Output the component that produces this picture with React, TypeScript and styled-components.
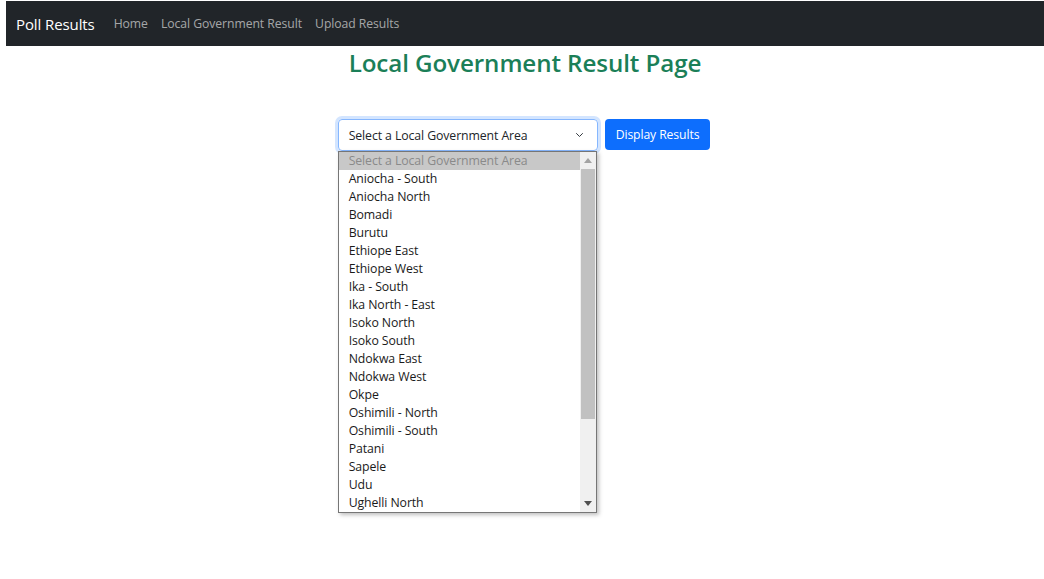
import React from "react";
import styled, { createGlobalStyle } from "styled-components";

const Global = createGlobalStyle`
  html, body { margin: 0; padding: 0; background: #fff; }
  body { font-family: "Open Sans", "Noto Sans", sans-serif; color: #212529; }
  * { box-sizing: border-box; }
`;

const Page = styled.div`
  padding: 1px 0 0 6px;
  width: 1044px;
  height: 579px;
  overflow: hidden;
`;

const Navbar = styled.nav`
  height: 45px;
  background: #212529;
  display: flex;
  align-items: center;
  padding: 0 10px;
`;

const Brand = styled.span`
  color: #fff;
  font-size: 15px;
  margin-right: 19px;
  letter-spacing: -0.1px;
`;

const NavLinks = styled.div`
  display: flex;
  gap: 13px;
`;

const NavLink = styled.span`
  color: rgba(255, 255, 255, 0.6);
  font-size: 12.2px;
  letter-spacing: -0.05px;
`;

const Main = styled.main`
  display: flex;
  flex-direction: column;
  align-items: center;
`;

const Title = styled.h2`
  margin: 1px 0 0;
  font-size: 24.2px;
  font-weight: 600;
  color: #1b7f58;
  line-height: 32px;
  letter-spacing: -0.1px;
`;

const FormRow = styled.div`
  margin-top: 40px;
  padding-right: 2px;
  display: flex;
  gap: 7px;
  align-items: flex-start;
`;

const SelectWrap = styled.div`
  position: relative;
  width: 260px;
`;

const SelectBox = styled.div`
  height: 32px;
  border: 1px solid #86b7fe;
  border-radius: 4px;
  box-shadow: 0 0 0 3px rgba(13, 110, 253, 0.18);
  display: flex;
  align-items: center;
  justify-content: space-between;
  padding: 0 12px 0 10px;
  font-size: 12.3px;
  color: #212529;
  letter-spacing: -0.1px;
`;

const List = styled.div`
  position: absolute;
  top: 32px;
  left: 0;
  width: 259px;
  height: 362px;
  background: #fff;
  border: 1px solid #767676;
  box-shadow: 2px 2px 4px rgba(0, 0, 0, 0.25);
  display: flex;
  overflow: hidden;
`;

const Options = styled.div`
  flex: 1;
  display: flex;
  flex-direction: column;
`;

const Option = styled.div<{ $placeholder?: boolean }>`
  height: 18px;
  line-height: 18px;
  padding-left: 10px;
  font-size: 12.3px;
  letter-spacing: -0.1px;
  white-space: nowrap;
  background: ${(p) => (p.$placeholder ? "#c8c8c8" : "transparent")};
  color: ${(p) => (p.$placeholder ? "#8a8a8a" : "#1a1a1a")};
`;

const Scrollbar = styled.div`
  width: 16px;
  background: #f0f0f0;
  display: flex;
  flex-direction: column;
  align-items: center;
`;

const Arrow = styled.div`
  height: 17px;
  width: 16px;
  display: flex;
  align-items: center;
  justify-content: center;
`;

const Track = styled.div`
  flex: 1;
  width: 100%;
  display: flex;
  flex-direction: column;
  align-items: center;
`;

const Thumb = styled.div`
  width: 14px;
  height: 250px;
  background: #c1c1c1;
`;

const Button = styled.button`
  height: 31px;
  padding: 0 11px;
  border: none;
  border-radius: 4px;
  background: #0d6efd;
  color: #fff;
  font-family: inherit;
  font-size: 12.2px;
  letter-spacing: -0.1px;
`;

const lgas = [
  "Aniocha - South",
  "Aniocha North",
  "Bomadi",
  "Burutu",
  "Ethiope East",
  "Ethiope West",
  "Ika - South",
  "Ika North - East",
  "Isoko North",
  "Isoko South",
  "Ndokwa East",
  "Ndokwa West",
  "Okpe",
  "Oshimili - North",
  "Oshimili - South",
  "Patani",
  "Sapele",
  "Udu",
  "Ughelli North",
];

export default function App() {
  return (
    <>
      <Global />
      <Page>
        <Navbar>
          <Brand>Poll Results</Brand>
          <NavLinks>
            <NavLink>Home</NavLink>
            <NavLink>Local Government Result</NavLink>
            <NavLink>Upload Results</NavLink>
          </NavLinks>
        </Navbar>
        <Main>
          <Title>Local Government Result Page</Title>
          <FormRow>
            <SelectWrap>
              <SelectBox>
                <span>Select a Local Government Area</span>
                <svg width="11" height="8" viewBox="0 0 16 16">
                  <path d="M2 5l6 6 6-6" fill="none" stroke="#343a40" strokeWidth="2" strokeLinecap="round" strokeLinejoin="round" />
                </svg>
              </SelectBox>
              <List>
                <Options>
                  <Option $placeholder>Select a Local Government Area</Option>
                  {lgas.map((l) => (
                    <Option key={l}>{l}</Option>
                  ))}
                </Options>
                <Scrollbar>
                  <Arrow>
                    <svg width="8" height="5" viewBox="0 0 8 5"><path d="M0 5L4 0L8 5Z" fill="#a3a3a3" /></svg>
                  </Arrow>
                  <Track>
                    <Thumb />
                  </Track>
                  <Arrow>
                    <svg width="8" height="5" viewBox="0 0 8 5"><path d="M0 0L8 0L4 5Z" fill="#505050" /></svg>
                  </Arrow>
                </Scrollbar>
              </List>
            </SelectWrap>
            <Button>Display Results</Button>
          </FormRow>
        </Main>
      </Page>
    </>
  );
}
